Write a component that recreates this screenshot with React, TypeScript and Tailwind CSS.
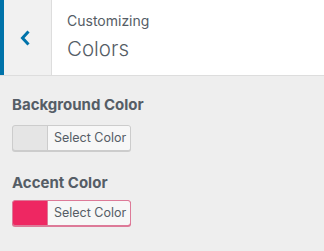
import React from "react";

function ColorButton({ color, border }: { color: string; border: string }) {
  return (
    <button
      className="flex h-[26px] w-[119px] items-stretch overflow-hidden rounded-[3px] border p-0"
      style={{ borderColor: border, backgroundColor: color, boxShadow: `0 1px 0 ${border}` }}
    >
      <span className="w-[34px] shrink-0" />
      <span
        className="flex flex-1 items-center border-l bg-[#f7f7f7] pl-[6px] text-[12.5px] text-[#555d66]"
        style={{ borderColor: border }}
      >
        Select Color
      </span>
    </button>
  );
}

export default function App() {
  return (
    <div
      className="h-[251px] w-[324px] overflow-hidden bg-[#eeeeee]"
      style={{ fontFamily: "Inter, 'Liberation Sans', sans-serif" }}
    >
      <div className="flex h-[76px] border-b border-[#dddddd] bg-white">
        <div className="w-[4px] bg-[#0073aa]" />
        <div className="flex w-[48px] items-center justify-center border-r border-[#dddddd] bg-[#f1f1f1] pr-[5px]">
          <svg width="12" height="18" viewBox="0 0 12 18">
            <path d="M9.5 2.5 L3.5 9 L9.5 15.5" fill="none" stroke="#0073aa" strokeWidth="3" />
          </svg>
        </div>
        <div className="flex flex-col pl-[15px] pt-[12px] text-[#555d66]">
          <span className="text-[14px] leading-[18px]">Customizing</span>
          <span className="mt-[7px] text-[20.5px] font-light leading-[24px]">Colors</span>
        </div>
      </div>
      <div className="flex flex-col px-[12px] pt-[19px]">
        <div className="text-[15px] font-bold leading-[20px] text-[#555d66]">Background Color</div>
        <div className="mt-[10px]">
          <ColorButton color="#e5e5e5" border="#cccccc" />
        </div>
        <div className="mt-[22px] text-[15px] font-bold leading-[20px] text-[#555d66]">Accent Color</div>
        <div className="mt-[7px]">
          <ColorButton color="#ee2762" border="#dd7a98" />
        </div>
      </div>
    </div>
  );
}
